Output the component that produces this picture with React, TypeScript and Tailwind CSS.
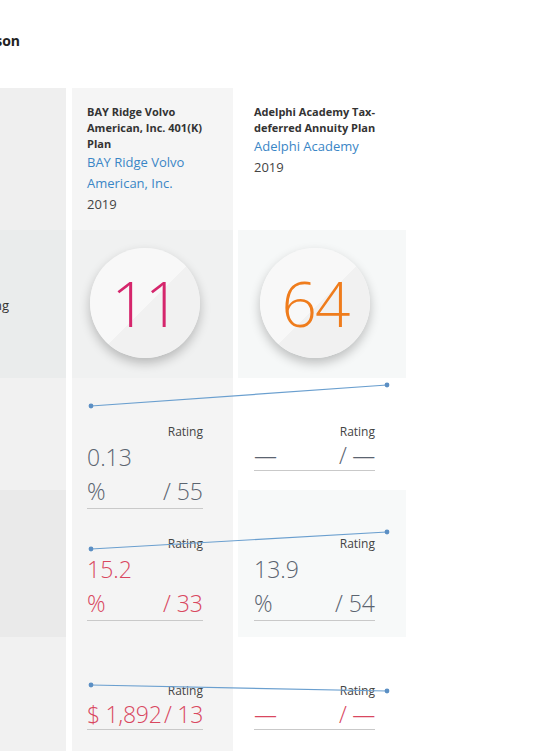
import type { ReactNode } from "react";

const font = { fontFamily: '"Open Sans", "Noto Sans", sans-serif' };

type Stat = {
  value?: string;
  unit?: string;
  rank: string;
  tone?: "gray" | "red";
  inline?: boolean;
};

function StatCell({ stat }: { stat: Stat }) {
  const color = stat.tone === "red" ? "text-[#d9475f]" : "text-[#5b6470]";
  return (
    <div className="relative z-10 w-full">
      <p className="text-right text-[12px] leading-[16px] text-[#444]">Rating</p>
      <div className={`border-b border-[#c9c9c9] text-[23px] font-light leading-[34px] ${color}`}>
        {stat.inline ? (
          <div className="flex items-center justify-between whitespace-nowrap leading-[30px] tracking-[-0.3px]">
            <span>{stat.value ?? "—"}</span>
            <span>/ {stat.rank}</span>
          </div>
        ) : (
          <>
            <div>{stat.value}</div>
            <div className="flex justify-between whitespace-nowrap">
              <span>{stat.unit}</span>
              <span>/ {stat.rank}</span>
            </div>
          </>
        )}
      </div>
    </div>
  );
}

function Row({
  label,
  left,
  a,
  b,
  aBg,
  bBg,
  height,
  children,
}: {
  label?: string;
  left: string;
  a: ReactNode;
  b: ReactNode;
  aBg: string;
  bBg: string;
  height: string;
  children?: ReactNode;
}) {
  return (
    <div className={`relative flex ${height}`}>
      <div className={`flex w-[166px] items-center justify-end pr-[57px] pt-[4px] text-[13px] text-[#333] ${left}`}>
        {label}
      </div>
      <div className={`ml-[6px] w-[161px] ${aBg}`}>{a}</div>
      <div className={`ml-[5px] w-[168px] ${bBg}`}>{b}</div>
      {children}
    </div>
  );
}

function Score({ n, color }: { n: string; color: string }) {
  return (
    <div className="flex h-[110px] w-[110px] items-center justify-center overflow-hidden rounded-full bg-[linear-gradient(135deg,#f8f8f8_52%,#f1f1f1_52%)] shadow-[0_5px_11px_rgba(0,0,0,0.24)]">
      <span className={`text-[62px] font-light leading-none tracking-[-2px] ${color}`}>{n}</span>
    </div>
  );
}

function Trend({ y1, y2 }: { y1: number; y2: number }) {
  return (
    <svg className="pointer-events-none absolute left-[100px] top-0 z-20" width="450" height="80">
      <line x1="91" y1={y1} x2="387" y2={y2} stroke="#6a9fcf" strokeWidth="1.2" />
      <circle cx="91" cy={y1} r="2.4" fill="#5b8fc4" />
      <circle cx="387" cy={y2} r="2.4" fill="#5b8fc4" />
    </svg>
  );
}

export default function App() {
  return (
    <div className="h-[751px] w-[550px] overflow-hidden bg-white" style={font}>
      <div className="-ml-[100px]">
        <div className="flex h-[88px] items-start pt-[30px]">
          <h1 className="w-[120px] text-right text-[14px] font-bold text-[#222]">Comparison</h1>
        </div>

        <Row
          left="bg-[#efefef]"
          aBg="bg-[#f5f5f5]"
          bBg="bg-white"
          height="h-[142px]"
          a={
            <div className="pl-[15px] pr-[16px] pt-[16px]">
              <p className="text-[11px] font-bold leading-[16px] text-[#333]">BAY Ridge Volvo American, Inc. 401(K) Plan</p>
              <p className="w-[120px] text-[13px] leading-[21px] text-[#3a86c6]">BAY Ridge Volvo American, Inc.</p>
              <p className="text-[13px] leading-[21px] text-[#444]">2019</p>
            </div>
          }
          b={
            <div className="pl-[16px] pr-[12px] pt-[16px]">
              <p className="text-[11px] font-bold leading-[16px] text-[#333]">Adelphi Academy Tax-deferred Annuity Plan</p>
              <p className="text-[13px] leading-[21px] text-[#3a86c6]">Adelphi Academy</p>
              <p className="text-[13px] leading-[21px] text-[#444]">2019</p>
            </div>
          }
        />

        <Row
          label="Rating"
          left="bg-[#eaecec]"
          aBg="bg-[#f0f1f1]"
          bBg="bg-[#f6f8f8]"
          height="h-[148px]"
          a={
            <div className="pl-[18px] pt-[18px]">
              <Score n="11" color="text-[#d5266c]" />
            </div>
          }
          b={
            <div className="pl-[22px] pt-[18px]">
              <Score n="64" color="text-[#ef7c1c]" />
            </div>
          }
        />

        <Row
          left="bg-[#f1f1f1]"
          aBg="bg-[#f4f4f4]"
          bBg="bg-white"
          height="h-[112px]"
          a={
            <div className="pl-[15px] pr-[30px] pt-[46px]">
              <StatCell stat={{ value: "0.13", unit: "%", rank: "55" }} />
            </div>
          }
          b={
            <div className="pl-[16px] pr-[31px] pt-[46px]">
              <StatCell stat={{ rank: "—", inline: true }} />
            </div>
          }
        >
          <Trend y1={28} y2={7} />
        </Row>

        <Row
          left="bg-[#eaeaea]"
          aBg="bg-[#f4f4f4]"
          bBg="bg-[#f7f9f9]"
          height="h-[147px]"
          a={
            <div className="pl-[15px] pr-[30px] pt-[46px]">
              <StatCell stat={{ value: "15.2", unit: "%", rank: "33", tone: "red" }} />
            </div>
          }
          b={
            <div className="pl-[16px] pr-[31px] pt-[46px]">
              <StatCell stat={{ value: "13.9", unit: "%", rank: "54" }} />
            </div>
          }
        >
          <Trend y1={59} y2={42} />
        </Row>

        <Row
          left="bg-[#f1f1f1]"
          aBg="bg-[#f4f4f4]"
          bBg="bg-white"
          height="h-[120px]"
          a={
            <div className="pl-[15px] pr-[30px] pt-[46px]">
              <StatCell stat={{ value: "$ 1,892", rank: "13", tone: "red", inline: true }} />
            </div>
          }
          b={
            <div className="pl-[16px] pr-[31px] pt-[46px]">
              <StatCell stat={{ rank: "—", tone: "red", inline: true }} />
            </div>
          }
        >
          <Trend y1={48} y2={54} />
        </Row>
      </div>
    </div>
  );
}
